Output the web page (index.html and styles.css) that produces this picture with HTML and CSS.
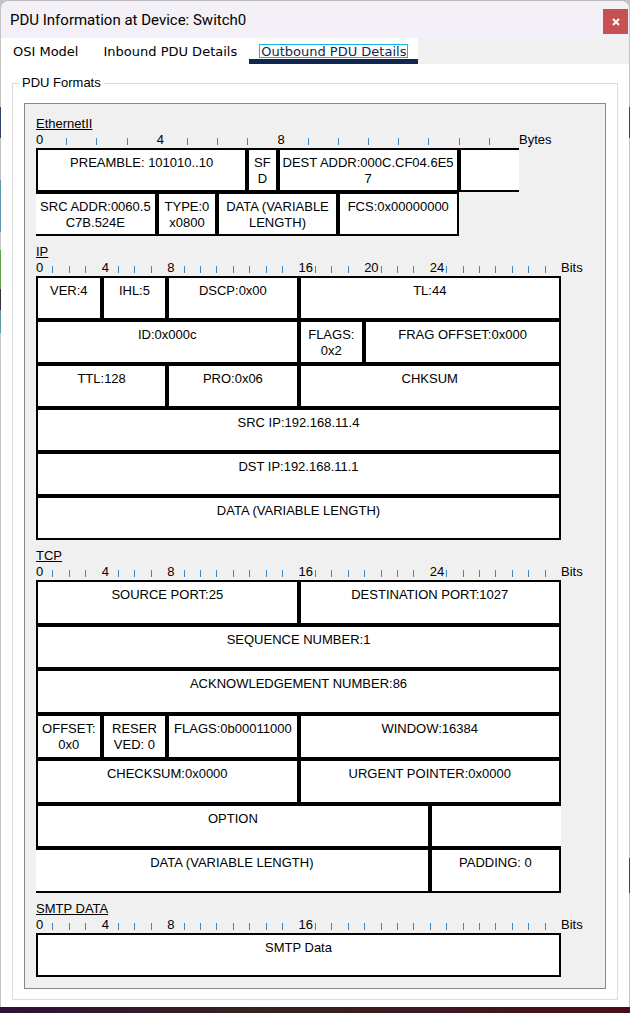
FILE: index.html
```html
<!DOCTYPE html>
<html lang="en">
<head>
<meta charset="utf-8">
<title>PDU Information at Device: Switch0</title>
<link rel="stylesheet" href="styles.css">
</head>
<body>
<main class="window">
  <header class="titlebar">
    <h1 class="title">PDU Information at Device: Switch0</h1>
    <button class="close" type="button" aria-label="Close">
      <svg width="8" height="8" viewBox="0 0 8 8" aria-hidden="true"><path d="M1 1 L7 7 M7 1 L1 7" stroke="#fff" stroke-width="2" fill="none"/></svg>
    </button>
  </header>
  <nav class="tabs" role="tablist">
    <button class="tab" type="button" role="tab" aria-selected="false"><span class="tab-label">OSI Model</span></button>
    <button class="tab" type="button" role="tab" aria-selected="false"><span class="tab-label">Inbound PDU Details</span></button>
    <button class="tab active" type="button" role="tab" aria-selected="true"><span class="tab-label">Outbound PDU Details</span></button>
  </nav>
  <fieldset class="formats">
    <legend class="legend">PDU Formats</legend>
    <div class="panel">
      <section class="pdu bytes">
        <h2 class="name">EthernetII</h2>
        <div class="ruler"><b>0</b><i></i><i></i><i></i><b>4</b><i></i><i></i><i></i><b>8</b><i></i><i></i><i></i><i></i><i></i><i></i><i></i></div>
        <span class="unit">Bytes</span>
        <div class="fields">
          <div class="field w7">PREAMBLE: 101010..10</div><div class="field w1">SF<br>D</div><div class="field w6">DEST ADDR:000C.CF04.6E5<br>7</div><div class="field w2 open-right"></div>
          <div class="field w4 open-left">SRC ADDR:0060.5<br>C7B.524E</div><div class="field w2">TYPE:0<br>x0800</div><div class="field w4">DATA (VARIABLE<br>LENGTH)</div><div class="field w4">FCS:0x00000000</div>
        </div>
      </section>
      <section class="pdu">
        <h2 class="name">IP</h2>
        <div class="ruler"><b>0</b><i></i><i></i><i></i><b>4</b><i></i><i></i><i></i><b>8</b><i></i><i></i><i></i><i></i><i></i><i></i><i></i><b>16</b><i></i><i></i><i></i><b>20</b><i></i><i></i><i></i><b>24</b><i></i><i></i><i></i><i></i><i></i><i></i><i></i></div>
        <span class="unit">Bits</span>
        <div class="fields">
          <div class="field w4">VER:4</div><div class="field w4">IHL:5</div><div class="field w8">DSCP:0x00</div><div class="field w16">TL:44</div>
          <div class="field w16">ID:0x000c</div><div class="field w4">FLAGS:<br>0x2</div><div class="field w12">FRAG OFFSET:0x000</div>
          <div class="field w8">TTL:128</div><div class="field w8">PRO:0x06</div><div class="field w16">CHKSUM</div>
          <div class="field w32">SRC IP:192.168.11.4</div>
          <div class="field w32">DST IP:192.168.11.1</div>
          <div class="field w32">DATA (VARIABLE LENGTH)</div>
        </div>
      </section>
      <section class="pdu">
        <h2 class="name">TCP</h2>
        <div class="ruler"><b>0</b><i></i><i></i><i></i><b>4</b><i></i><i></i><i></i><b>8</b><i></i><i></i><i></i><i></i><i></i><i></i><i></i><b>16</b><i></i><i></i><i></i><i></i><i></i><i></i><i></i><b>24</b><i></i><i></i><i></i><i></i><i></i><i></i><i></i></div>
        <span class="unit">Bits</span>
        <div class="fields tall">
          <div class="field w16">SOURCE PORT:25</div><div class="field w16">DESTINATION PORT:1027</div>
          <div class="field w32">SEQUENCE NUMBER:1</div>
          <div class="field w32">ACKNOWLEDGEMENT NUMBER:86</div>
          <div class="field w4">OFFSET:<br>0x0</div><div class="field w4">RESER<br>VED: 0</div><div class="field w8">FLAGS:0b00011000</div><div class="field w16">WINDOW:16384</div>
          <div class="field w16">CHECKSUM:0x0000</div><div class="field w16">URGENT POINTER:0x0000</div>
          <div class="field w24">OPTION</div><div class="field w8 open-right"></div>
          <div class="field w24 open-left">DATA (VARIABLE LENGTH)</div><div class="field w8">PADDING: 0</div>
        </div>
      </section>
      <section class="pdu">
        <h2 class="name">SMTP DATA</h2>
        <div class="ruler"><b>0</b><i></i><i></i><i></i><b>4</b><i></i><i></i><i></i><b>8</b><i></i><i></i><i></i><i></i><i></i><i></i><i></i><b>16</b><i></i><i></i><i></i><i></i><i></i><i></i><i></i><i></i><i></i><i></i><i></i><i></i><i></i><i></i><i></i></div>
        <span class="unit">Bits</span>
        <div class="fields">
          <div class="field w32">SMTP Data</div>
        </div>
      </section>
    </div>
  </fieldset>
</main>
</body>
</html>
```
FILE: styles.css
```css
* { box-sizing: border-box; }

body {
  margin: 0;
  min-height: 100vh;
  padding: 0 1px 6px;
  font: 13px/16px "Liberation Sans", Arial, sans-serif;
  color: #000;
  background:
    linear-gradient(90deg, #2d1236, #33241f 40%, #3d1a22 65%, #4a0d18) bottom / 100% 6px no-repeat,
    linear-gradient(#c4c4c4 107px, #35426a 107px 138px, #c0c0c0 138px 180px, #5f95a8 180px 232px, #c8c8c8 232px 250px, #63a04e 250px 289px, #35303a 289px 310px, #5f95a8 310px 333px, #c8c8c8 333px 363px, #c4c4c4 363px) left top / 1px 100% no-repeat,
    linear-gradient(#c4c4c4 107px, #35426a 107px 138px, #c4c4c4 138px 858px, #35426a 858px 893px, #c4c4c4 893px) right top / 1px 100% no-repeat,
    #c4c4c4;
}

.window {
  background: #fff;
  border-top: 1px solid #b9b7bb;
  border-radius: 8px 8px 0 0;
  padding-bottom: 7px;
}

.titlebar {
  display: flex;
  align-items: center;
  justify-content: space-between;
  height: 37px;
  padding: 0 1px 0 9px;
  background: #f3f0f8;
  border-radius: 8px 8px 0 0;
}

.title {
  margin: 0;
  font: 15px/20px Roboto, "Noto Sans", sans-serif;
}

.close {
  display: flex;
  align-items: center;
  justify-content: center;
  width: 25px;
  height: 25px;
  margin-top: 4px;
  padding: 0;
  border: 0;
  background: #c75050;
}

.tabs {
  display: flex;
  height: 26px;
  background: #f0f0f0;
}

.tab {
  padding: 6px 10px 1px;
  border: 0;
  border-bottom: 5px solid #fff;
  background: #fff;
  color: #000;
  font: 13px/13px "DejaVu Sans", Verdana, sans-serif;
  white-space: nowrap;
}

.tab:first-child { padding-right: 11px; }

.tab-label {
  display: block;
  padding: 1px 2px 0;
}

.tab.active {
  border-bottom-color: #10284f;
  color: #10284f;
}

.active .tab-label { outline: 1px solid #12b5ea; outline-offset: -1px; }

.formats {
  min-width: 0;
  margin: 11px 11px 0;
  padding: 12px 11px 10px;
  border: 1px solid #dcdcdc;
}

.legend {
  margin-left: -5px;
  padding: 0 3px;
}

.panel {
  display: flex;
  flex-direction: column;
  gap: 8px;
  padding: 12px 0 11px 11px;
  border: 1px solid #828790;
  background: #f0f0f0;
}

.pdu {
  --units: 32;
  display: grid;
  grid-template-columns: 1fr 44px;
}

.bytes {
  --units: 16;
  grid-template-columns: 1fr 86px;
}

.name {
  grid-column: 1 / -1;
  margin: 0;
  font: inherit;
  text-decoration: underline;
}

.ruler {
  display: grid;
  grid-template-columns: repeat(var(--units), minmax(0, 1fr));
  height: 16px;
}

.ruler b { font-weight: normal; }

.ruler i {
  height: 7px;
  margin-top: 6px;
  border-left: 1px solid #3a87cb;
}

.fields {
  display: grid;
  grid-template-columns: repeat(var(--units), minmax(0, 1fr));
  grid-auto-rows: minmax(44px, 1fr);
}

.tall { min-height: 313px; }

.field {
  padding-top: 5px;
  border: 2px solid #000;
  background: #fff;
  text-align: center;
  white-space: nowrap;
}

.open-right { border-right: 0; }
.open-left { border-left: 0; }

.w1 { grid-column: span 1; }
.w2 { grid-column: span 2; }
.w4 { grid-column: span 4; }
.w6 { grid-column: span 6; }
.w7 { grid-column: span 7; }
.w8 { grid-column: span 8; }
.w12 { grid-column: span 12; }
.w16 { grid-column: span 16; }
.w24 { grid-column: span 24; }
.w32 { grid-column: span 32; }
```
